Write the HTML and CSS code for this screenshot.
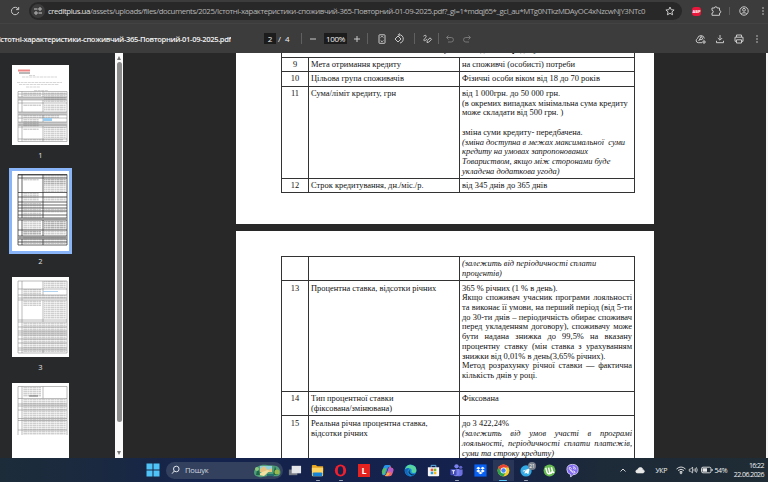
FILE: index.html
```html
<!DOCTYPE html>
<html lang="uk">
<head>
    <meta charset="UTF-8">
    <title>Істотні-характеристики-споживчий-365-Повторний-01-09-2025.pdf</title>
    <link rel="stylesheet" href="styles.css">
</head>
<body>
    <svg class="defs" width="0" height="0">
        <defs>
            <pattern id="txt" width="9" height="2" patternUnits="userSpaceOnUse">
                <path d="M0 .8h2.6M3 .8h3.6M7 .8h1.6" stroke="#777" stroke-width=".8" stroke-opacity=".65"/>
            </pattern>
        </defs>
    </svg>

    <header class="browser-bar">
        <svg class="reload" viewBox="0 0 12 12"><path d="M9.3 4.1A3.7 3.7 0 1 0 9.7 7M9.7 2v2.6H7.1"/></svg>
        <div class="omnibox">
            <span class="site-info"><svg viewBox="0 0 10 10"><path d="M1 3h3.5M5.5 7H9"/><circle cx="7" cy="3" r="1.2"/><circle cx="3" cy="7" r="1.2"/></svg></span>
            <span class="url"><b>creditplus.ua</b>/assets/uploads/files/documents/2025/Істотні-характеристики-споживчий-365-Повторний-01-09-2025.pdf?_gl=1*mdqj65*_gcl_au*MTg0NTkzMDAyOC4xNzcwNjY3NTc0</span>
            <svg class="star" viewBox="0 0 12 12"><path d="M6 2l1.2 2.7 2.9.3-2.2 1.9.7 2.9L6 8.3 3.4 9.8l.7-2.9L1.900 5l2.900-.3z"/></svg>
        </div>
        <div class="browser-icons">
            <span class="abp">ABP</span>
            <svg class="ext" viewBox="0 0 12 12"><path d="M2 3h2.500a1.300 1.300 0 0 1 2.600 0H9.500v2.500a1.300 1.300 0 0 1 0 2.600V10.300H2V8a1.300 1.300 0 0 0 0-2.600z"/></svg>
            <i class="bar-sep"></i>
            <svg class="profile" viewBox="0 0 12 12"><circle cx="6" cy="6" r="4.200"/><circle cx="6" cy="4.800" r="1.400"/><path d="M3.200 9c1-1.700 4.600-1.700 5.600 0"/></svg>
            <svg class="dots" viewBox="0 0 4 12"><circle cx="2" cy="3" r=".8"/><circle cx="2" cy="6" r=".8"/><circle cx="2" cy="9" r=".8"/></svg>
        </div>
    </header>

    <div class="pdf-bar">
        <div class="pdf-title"><span>Істотні-характеристики-споживчий-365-Повторний-01-09-2025.pdf</span></div>
        <div class="pdf-tools">
            <span class="box page-no">2</span><span class="total">/&nbsp; 4</span>
            <i class="sep s1"></i>
            <svg class="minus" viewBox="0 0 12 12"><path d="M3 6h6"/></svg>
            <span class="box zoom">100%</span>
            <svg class="plus" viewBox="0 0 12 12"><path d="M3 6h6M6 3v6"/></svg>
            <i class="sep s2"></i>
            <svg class="fit" viewBox="0 0 12 12"><rect x="3" y="1.800" width="6" height="8.500" rx=".5"/><path d="M4.700 4.500L6 3.200l1.300 1.300M4.700 7.500L6 8.800l1.300-1.300"/></svg>
            <svg class="rotate" viewBox="0 0 12 12"><path d="M2 6l3-3 3 3-3 3zM5.500 1.700C9 1.500 10.600 4 10.200 6.500c-.3 1.900-1.600 3.200-3.200 3.500M6.700.5L5.400 1.700l1.300 1.400"/></svg>
            <i class="sep s3"></i>
            <svg class="draw" viewBox="0 0 12 12"><path d="M2.500 3.200c2-1.700 3.500-.6 2.200 1.200-1.500 2-2.700 3.100-1.300 3.300 1.200.1 1.700-1.300 2.700-1.500M6 9.500l.2-1.800L9 4.800l1.500 1.500-2.800 2.900z"/></svg>
            <i class="sep s4"></i>
            <svg class="undo dim" viewBox="0 0 12 12"><path d="M4.500 2.500L2.500 4.500l2 2M2.700 4.500h4.500a2.200 2.200 0 0 1 0 4.500H4"/></svg>
            <svg class="redo dim" viewBox="0 0 12 12"><path d="M7.500 2.500l2 2-2 2M9.300 4.500H4.800a2.200 2.200 0 0 0 0 4.500H8"/></svg>
        </div>
        <div class="pdf-actions">
            <svg viewBox="0 0 12 12"><path d="M7 9.700H3.200A2.200 2.200 0 0 1 2.500 5.500 3.500 3.500 0 0 1 9.400 5.500M3.700 8l2.500-4.700L8 6.500M4.500 6.600h2.700M9 7v4M7 9h4"/></svg>
            <svg viewBox="0 0 12 12"><path d="M6 2v5M3.800 5L6 7.200 8.200 5M2.500 7.800v1.900h7V7.800"/></svg>
            <svg viewBox="0 0 12 12"><path d="M3.500 4V2h5v2M3.500 8.300H2V4.200h8v4.100H8.500M3.500 6.800h5v3.200h-5z"/></svg>
            <svg class="dots" viewBox="0 0 4 12"><circle cx="2" cy="3" r=".8"/><circle cx="2" cy="6" r=".8"/><circle cx="2" cy="9" r=".8"/></svg>
        </div>
    </div>

    <main class="viewer">
        <aside class="thumbs">
            <figure class="thumb">
                <svg viewBox="0 0 57 80">
                    <path d="M6 5.500h12" stroke="#e88" stroke-width="2"/><path d="M7 8h11" stroke="#888" stroke-width="1.200"/>
                    <path d="M17 10.500h6M10 12h35M5 17.500h45M7 19.500h40M14 22h14M22 25.500h14" stroke="#bbb" stroke-width=".6" stroke-dasharray="3 .6"/>
                    <path d="M6 26.500h49v50H6zM10 26.500v50M31 26.500v50" class="grid"/>
                    <path d="M6 32h49v3H6zM6 47h49v3H6zM6 57h49v4H6z" fill="#ccc"/>
                    <path d="M6 29h49M6 32h49M6 35h49M6 38h49M6 47h49M6 50h49M6 53h49M6 57h49M6 60h49M6 62h49M6 74h49" class="grid"/>
                    <path d="M11 27h18v4H11zM32 27h22v10H32zM11 39h18v2H11zM32 39h22v7H32zM11 50h36v3H11zM11 54h16v8H11zM11 63h16v2H11zM32 62h22v11H32zM11 74h40v2H11z" fill="url(#txt)"/>
                    <path d="M31 53h9v3h-9z" fill="#9bcdf0"/>
                </svg>
                <figcaption>1</figcaption>
            </figure>
            <figure class="thumb selected">
                <svg viewBox="0 0 57 80">
                    <path d="M6 3.500h49v70.500H6zM10 3.500v70.500M31 3.500v70.500" class="grid dark"/>
                    <path d="M6 4h49M6 7h49M6 21.500h49M6 26h49M6 31h49M6 34h49M6 37h49M6 40h49M6 44h49M6 47h49M6 49h49M6 59h49M6 65h49M6 68h49M6 71h49" class="grid dark"/>
                    <path d="M6 47h49v2H6zM6 65h49v3H6z" fill="#999"/>
                    <path d="M11 8h16v2H11zM32 4h22v17H32zM11 22h16v8H11zM32 25h22v5H32zM11 32h18v16H11zM32 37h22v5H32zM11 50h18v14H11zM32 50h22v14H32zM11 66h43v7H11z" fill="url(#txt)"/>
                    <path d="M32 8h22v6H32zM32 50h22v8H32zM11 60h18v4H11z" fill="url(#txt)"/>
                </svg>
                <figcaption>2</figcaption>
            </figure>
            <figure class="thumb">
                <svg viewBox="0 0 57 80">
                    <path d="M6 4h49v72H6zM10 4v72M31 4v14M31 23v22M31 73v3" class="grid"/>
                    <path d="M6 12h49M6 18h49M6 21h49M6 23h49M6 43h49M6 45h49M6 50h49M6 54h49M6 56h49M6 58h49M6 62h49M6 66h49M6 71h49M6 73h49" class="grid"/>
                    <path d="M32 4h22v7H32zM11 12h18v6H11zM11 23h18v6H11zM32 23h22v19H32zM11 45h43v30H11zM11 18h43v4H11z" fill="url(#txt)"/>
                    <path d="M31 14.500h15" stroke="#9bc6ea" stroke-width=".8"/>
                </svg>
                <figcaption>3</figcaption>
            </figure>
            <figure class="thumb">
                <svg viewBox="0 0 57 80">
                    <path d="M6 52V3.500h49V52M10 3.500V52M31 3.500v12" class="grid"/>
                    <path d="M6 15.500h49M6 21h49M6 23h49M6 27h49M6 35.500h49M6 37.500h49M6 47h49" class="grid"/>
                    <path d="M11 4h18v10H11zM11 16h43v36H11z" fill="url(#txt)"/>
                    <path d="M17 13h9" stroke="#555" stroke-width=".8"/>
                </svg>
            </figure>
        </aside>
        <div class="scrollbar"><i class="up"></i><i class="handle"></i><i class="down"></i></div>

        <section class="pages">
            <article class="page first">
                <div class="doc">
                    <div class="row head"><div class="num">8</div><div class="merged">Основні умови надання кредиту</div></div>
                    <div class="row r9"><div class="num">9</div><div class="name">Мета отримання кредиту</div><div class="val">на споживчі (особисті) потреби</div></div>
                    <div class="row r10"><div class="num">10</div><div class="name">Цільова група споживачів</div><div class="val">Фізичні особи віком від 18 до 70 років</div></div>
                    <div class="row r11">
                        <div class="num">11</div><div class="name">Сума/ліміт кредиту, грн</div>
                        <div class="val">від 1 000грн. до 50 000 грн.<br>(в окремих випадках мінімальна сума кредиту<br>може складати від 500 грн. )<br><br>зміна суми кредиту- передбачена.<br><em>(зміна доступна в межах максимальної&nbsp; суми<br>кредиту на умовах запропонованих<br>Товариством, якщо між сторонами буде<br>укладена додаткова угода)</em></div>
                    </div>
                    <div class="row r12"><div class="num">12</div><div class="name">Строк кредитування, дн./міс./р.</div><div class="val">від 345 днів до 365 днів</div></div>
                </div>
            </article>
            <article class="page second">
                <div class="doc">
                    <div class="row r12b"><div class="num"></div><div class="name"></div><div class="val"><em>(залежить від періодичності сплати<br>процентів)</em></div></div>
                    <div class="row r13">
                        <div class="num">13</div><div class="name">Процентна ставка, відсотки річних</div>
                        <div class="val">365 % річних (1 % в день).
                            <p class="just">Якщо споживач учасник програми лояльності</p>
                            <p class="just">та виконає її умови, на перший період (від 5-ти</p>
                            <p class="just">до 30-ти днів – періодичність обирає споживач</p>
                            <p class="just">перед укладенням договору), споживачу може</p>
                            <p class="just">бути надана знижка до 99,5% на вказану</p>
                            <p class="just">процентну ставку (мін ставка з урахуванням</p>
                            <p>знижки від 0,01% в день(3,65% річних).</p>
                            <p class="just">Метод розрахунку річної ставки — фактична</p>
                            <p>кількість днів у році.</p>
                        </div>
                    </div>
                    <div class="row r14"><div class="num">14</div><div class="name">Тип процентної ставки<br>(фіксована/змінювана)</div><div class="val">Фіксована</div></div>
                    <div class="row r15">
                        <div class="num">15</div><div class="name">Реальна річна процентна ставка,<br>відсотки річних</div>
                        <div class="val">до 3 422,24%
                            <em><p class="just">(залежить від умов участі в програмі</p>
                            <p class="just">лояльності, періодичності сплати платежів,</p>
                            <p>суми та строку кредиту)</p></em>
                        </div>
                    </div>
                </div>
            </article>
        </section>
        <div class="edge-scroll"></div>
    </main>

    <footer class="taskbar">
        <svg class="start" viewBox="0 0 14 14"><path d="M.5.500h6v6h-6zM7.500.500h6v6h-6zM.5 7.500h6v6h-6zM7.500 7.500h6v6h-6z" fill="#4fc3f7"/></svg>
        <div class="search">
            <svg class="lens" viewBox="0 0 10 10"><circle cx="5.300" cy="4" r="2.800"/><path d="M3.300 6L1 8.700"/></svg>
            <span>Пошук</span>
            <svg class="scene" viewBox="0 0 28 15">
                <path d="M1 9C2 3 9 1 14 2s11-1 13 5-3 7-8 6-9 2-13 1-5-2-5-5z" fill="#4f9c78"/>
                <path d="M7 3h12v5H7z" fill="#8ed0dc"/><path d="M7 6l4-3 4 4 4-2v4H7z" fill="#e4c382"/>
                <path d="M6 12c2-4 5-3 8-5l3 1c-3 1-3 3-6 5z" fill="#f3dfa0"/>
                <path d="M3 12l2-9 2 9zM20 12l2-9 3 9z" fill="#1f6848"/><circle cx="24" cy="9" r="2.500" fill="#9db84a"/><circle cx="4" cy="6" r="2" fill="#8bc77c"/><path d="M14 11h7v2h-7z" fill="#286d70"/>
            </svg>
        </div>
        <div class="apps">
            <div class="app"><svg viewBox="0 0 16 16"><path d="M2 7h9v6H2z" fill="#777b83"/><path d="M5 3h10v8H5z" fill="#e3e5e8"/></svg></div>
            <div class="app run"><svg viewBox="0 0 16 16"><path d="M2 3q0-1 1-1h3l2 1.500h6v5H2z" fill="#e8a520"/><path d="M2 5h12v8q0 1-1 1H3q-1 0-1-1z" fill="#ffd461"/><path d="M4 10h8q1 0 1 1v3H3v-3q0-1 1-1z" fill="#1784d8"/></svg></div>
            <div class="app run"><svg viewBox="0 0 16 16"><ellipse cx="8" cy="8" rx="6" ry="6.300" fill="#f2202e"/><ellipse cx="8" cy="8" rx="2.900" ry="4.600" fill="#15234a"/></svg></div>
            <div class="app"><span class="tile-l">L</span></div>
            <div class="app"><svg viewBox="0 0 16 16"><path d="M6 2h4q1 0 1.500 2l-3 1-2 6q-.5 2-2 2-3 0-2.500-3l1.500-5q.7-3 2.500-3z" fill="#2792e8"/><path d="M2 9l1-3 4-1-2 7q-2 2-3-3z" fill="#57bd67"/><path d="M10 2q1 0 1.500 2l.5 1q3 0 2 4l-1 3q-.6 2-3 2H6q-1 0-1-1 1.500 0 2-2l2-5q.6-2 2-2z" fill="#ed6574"/><path d="M9 6q1-2 3-1 3 0 2 4l-1 2q-2-3-5-2z" fill="#b55bc8"/><path d="M5 13q2 0 2.500-3l3 1q-1 3-3 3z" fill="#f3ad49"/></svg></div>
            <div class="app"><svg viewBox="0 0 16 16"><circle cx="8" cy="8" r="6.300" fill="#168bd6"/><path d="M2 7Q4 1 9 2q6 1 5.200 7-1 2-4 1.500-2-.5-1-2 .4-3-3-3Q3.500 5.500 2 7z" fill="#57d5a0"/><path d="M7 7q-3 4 2 6 2 .8 4-1.500-3 1.500-5-.5Q6.500 9.500 7 7z" fill="#102b56"/><path d="M2 7q2-2 4.500-1.500Q4 8 5 11q1 2 3 3-6 0-6-7z" fill="#1464ba"/></svg></div>
            <div class="app"><svg viewBox="0 0 16 16"><path d="M5.500 5V2.500h5V5" fill="none" stroke="#63baf0"/><path d="M2 4.500h12V13q0 1-1 1H3q-1 0-1-1z" fill="#f5f5f5"/><path d="M5 6h2.700v2.700H5z" fill="#ef5533"/><path d="M8.300 6H11v2.700H8.300z" fill="#78b82a"/><path d="M5 9.300h2.700V12H5z" fill="#21a1e8"/><path d="M8.300 9.300H11V12H8.300z" fill="#f8b91a"/></svg></div>
            <div class="app run"><svg viewBox="0 0 16 16"><circle cx="8" cy="3.500" r="2.300" fill="#7a83ed"/><circle cx="12.500" cy="4.500" r="1.700" fill="#6264ce"/><path d="M9 7h5.500v4q0 3-3 3H9z" fill="#6b6fe0"/><path d="M4 6.500h7V11q0 3-3.500 3T4 11z" fill="#7b83eb"/><rect x="1.500" y="6.500" width="6.500" height="6.500" rx=".8" fill="#444db5"/><path d="M3 8.200h3.500M4.750 8.200v3.500" stroke="#fff" stroke-width=".9"/></svg></div>
            <div class="app"><svg viewBox="0 0 16 16"><path d="M1.500 1.500h13v13h-13z" fill="#0861f2"/><path d="M5.700 4L8 5.500 5.700 7 3.400 5.500zM10.300 4l2.300 1.500L10.300 7 8 5.500zM5.700 7L8 8.500 5.700 10 3.400 8.500zM10.300 7l2.300 1.500-2.300 1.500L8 8.500zM8 9.200l2.300 1.400L8 12l-2.300-1.400z" fill="#fff"/></svg></div>
            <div class="app active"><svg viewBox="0 0 16 16"><circle cx="8" cy="8" r="6.300" fill="#f9ca28"/><path d="M2.500 4.900a6.300 6.300 0 0 1 11 0H8L5.300 9.600z" fill="#e94335"/><path d="M2.500 4.900a6.300 6.300 0 0 0 5.300 9.400L10.600 9.500H5.300z" fill="#2ba24c"/><circle cx="8" cy="8" r="3.100" fill="#fff"/><circle cx="8" cy="8" r="2.400" fill="#4285f4"/></svg></div>
            <div class="app run"><svg viewBox="0 0 16 16"><circle cx="7.500" cy="8.500" r="6" fill="#32a9e4"/><path d="M3.500 8.500l8-3-1.500 6.500-2.500-1.700-1.400 1.300-.1-2.300 3.500-3L5 9z" fill="#fff"/></svg><span class="badge">21</span></div>
            <div class="app"><svg viewBox="0 0 16 16"><circle cx="8" cy="8" r="6.300" fill="#64b950"/><path d="M4 5l1.200 4.500q.7 2.500 3.300 1.700L7 5M10 4.500l1.300 4.800q.5 1 1.700.6M8.500 11.200q2.500-.2 2-2.500" fill="none" stroke="#fff" stroke-width="1.600"/></svg></div>
            <div class="app"><svg viewBox="0 0 16 16"><path d="M8 1.500q6 0 6 5.500 0 5.500-5.500 5.500L6 15v-2.700Q2 11.500 2 7q0-5.500 6-5.500z" fill="#8068f0" stroke="#eeeaff" stroke-width=".8"/><path d="M5.300 4.300q-1.300.5-.6 2 1.600 3.300 4.600 4.400 1.200.3 1.500-1.100L9.200 8.500l-.8.700Q6.800 8.300 6.200 6.800l.7-.8zM8.300 3.800q3 .1 3.200 3.200M8.500 5.300q1.400.2 1.500 1.600" fill="none" stroke="#fff" stroke-width=".8"/></svg></div>
        </div>
        <div class="tray">
            <svg class="chev" viewBox="0 0 8 8"><path d="M1.500 5.500L4 3l2.500 2.500"/></svg>
            <svg class="cloud" viewBox="0 0 12 10"><path d="M3 8.500Q1 8.500 1 6.700t2-1.900Q4 2 6.500 2 9 2 9.400 4.600 11.300 5 11.200 6.800 11 8.500 9.300 8.500z"/></svg>
            <span class="lang">УКР</span>
            <svg class="wifi" viewBox="0 0 12 10"><path d="M1.500 4q4.500-4 9 0M3 5.500q3-2.500 6 0M4.500 7q1.500-1.200 3 0"/><circle cx="6" cy="8" r=".8"/></svg>
            <svg class="vol" viewBox="0 0 12 10"><path d="M1.500 4v2.500H3L5.500 8.500v-7L3 4zM7 3.800q1 1.200 0 2.500M8.500 2.700q1.800 2.300 0 4.700M10 1.700q2.300 3.300 0 6.600"/></svg>
            <svg class="batt" viewBox="0 0 12 10"><rect x=".5" y="2.200" width="9.500" height="5.600" rx="1.500"/><path d="M1.500 3.200h4.500v3.600H1.500zM10.600 4h1v2h-1z" class="f"/></svg>
            <span class="pct">54%</span>
            <div class="clock"><span>16:22</span><span>22.06.2026</span></div>
        </div>
    </footer>
</body>
</html>
```
FILE: styles.css
```css
* {
    box-sizing: border-box;
}

body {
    margin: 0;
    width: 768px;
    height: 482px;
    overflow: hidden;
    display: flex;
    flex-direction: column;
    background: #3c3c3c;
    color: #e3e3e3;
    font-family: "Open Sans", sans-serif;
    font-size: 8px;
}

svg {
    display: block;
    flex: none;
}

p, figure {
    margin: 0;
}

/* Browser bar */
.browser-bar {
    height: 24px;
    flex: none;
    display: flex;
    align-items: flex-start;
    padding-top: 2px;
    border-bottom: 1px solid #434343;
}

.browser-bar svg, .pdf-bar svg {
    width: 12px;
    height: 12px;
    fill: none;
    stroke: #c9c9c9;
    stroke-width: 1;
}

.browser-bar .reload {
    margin: 3px 8px 0 9px;
}

.omnibox {
    width: 653px;
    flex: none;
    height: 18px;
    border-radius: 9px;
    background: #282828;
    display: flex;
    align-items: center;
    padding-left: 2px;
}

.site-info {
    width: 14px;
    height: 14px;
    flex: none;
    border-radius: 50%;
    background: #3c3c3c;
    padding: 2px;
    margin-right: 3px;
}

.browser-bar .site-info svg {
    width: 10px;
    height: 10px;
}

.url {
    width: 616px;
    flex: none;
    white-space: nowrap;
    font-size: 7.8px;
    letter-spacing: -.41px;
    color: #b5b5b5;
}

.url b {
    font-weight: normal;
    color: #e3e3e3;
}

.browser-icons {
    display: flex;
    align-items: center;
    height: 18px;
    margin-left: 10px;
}

.abp {
    width: 9px;
    height: 9px;
    border-radius: 3px;
    background: #e8183c;
    color: #fff;
    font-size: 4px;
    font-weight: bold;
    line-height: 9px;
    text-align: center;
}

.ext {
    margin-left: 9px;
}

.bar-sep {
    width: 1px;
    height: 8px;
    background: #5d5d5d;
    margin: 0 8px 0 7px;
}

.browser-bar svg.dots, .pdf-bar svg.dots {
    width: 4px;
    fill: #c9c9c9;
    stroke: none;
}

.browser-bar svg.dots {
    margin-left: 11px;
}

/* PDF toolbar */
.pdf-bar {
    height: 29px;
    flex: none;
    display: flex;
    align-items: center;
    color: #f1f1f1;
}

.pdf-title {
    width: 231px;
    height: 14px;
    margin-right: 33px;
    display: flex;
    justify-content: flex-end;
    overflow: hidden;
    white-space: nowrap;
    font-size: 7.6px;
    letter-spacing: -.36px;
    font-weight: 600;
    line-height: 14px;
}

.pdf-tools {
    width: 426px;
    display: flex;
    align-items: center;
}

.box {
    height: 11px;
    line-height: 11px;
    background: #1c1c1c;
    text-align: center;
}

.page-no {
    width: 12px;
}

.total {
    width: 22px;
    padding-left: 2px;
}

.zoom {
    width: 23px;
    letter-spacing: -.3px;
}

.sep {
    width: 1px;
    height: 11px;
    background: #606060;
}

.s1 { margin: 0 5px 0 3px; }
.minus { margin-right: 5px; }
.plus { margin-left: 4px; }
.s2 { margin: 0 8px 0 4px; }
.rotate { margin-left: 5px; }
.s3 { margin: 0 6px 0 9px; }
.s4 { margin: 0 5px 0 5px; }
.redo { margin-left: 5px; }

.pdf-bar .dim {
    stroke: #777;
}

.pdf-actions {
    display: flex;
    gap: 7px;
    margin-left: 5px;
}

.pdf-bar svg.dots {
    margin-left: 3px;
}

/* Viewer */
.viewer {
    height: 405px;
    flex: none;
    display: flex;
    overflow: hidden;
    background: #282828;
}

.thumbs {
    width: 115px;
    flex: none;
    padding: 12px 0 0 12px;
    background: #28292a;
}

.thumb {
    width: 57px;
    height: 106px;
}

.thumb svg {
    width: 57px;
    height: 80px;
    background: #fff;
}

.thumb.selected svg {
    outline: 3px solid #8ab4f8;
}

.thumb figcaption {
    text-align: center;
    line-height: 20px;
    font-size: 7.5px;
}

.grid {
    fill: none;
    stroke: #777;
    stroke-width: .5;
}

.grid.dark {
    stroke: #222;
    stroke-width: .7;
}

.scrollbar {
    width: 8px;
    flex: none;
    background: #fafafa;
    display: flex;
    flex-direction: column;
    align-items: center;
    padding: 3px 0;
}

.up, .down {
    border: 2.5px solid transparent;
    border-top: 0;
    border-bottom: 4px solid #777;
}

.down {
    border-bottom: 0;
    border-top: 4px solid #777;
    margin-top: auto;
}

.handle {
    width: 5px;
    height: 360px;
    margin-top: 2px;
    border-radius: 3px;
    background: #8b8b8b;
}

.pages {
    width: 418px;
    margin-left: 113px;
    flex: none;
}

.page {
    background: #fff;
    padding-left: 45px;
    overflow: hidden;
}

.first {
    height: 171px;
    margin-bottom: 7px;
}

.second {
    height: 300px;
    padding-top: 25px;
}

.doc {
    width: 354px;
    border: solid #333;
    border-width: 0 1px;
    color: #111;
    font-family: "Liberation Serif", serif;
    font-size: 8.43px;
    line-height: 9.72px;
}

.second .doc {
    border-top: 1px solid #333;
}

.row {
    display: flex;
    border-bottom: 1px solid #333;
}

.num {
    width: 27px;
    text-align: center;
    padding-top: 2px;
    border-right: 1px solid #333;
}

.name {
    width: 151px;
    padding: 2px 0 0 2px;
    border-right: 1px solid #333;
    white-space: nowrap;
}

.val {
    width: 174px;
    padding: 2px 0 0 2px;
    white-space: nowrap;
}

.just {
    width: 170px;
    text-align-last: justify;
}

/* heading row, scrolled almost out of view */
.head {
    height: 5px;
    align-items: flex-start;
}

.head .num, .head .merged {
    border: 0;
    padding-top: 0;
    margin-top: -8px;
}

.merged {
    font-weight: bold;
    padding-left: 100px;
    word-spacing: 2px;
}

.r9 { height: 14px; }
.r10 { height: 15px; }
.r11 { height: 92px; }
.r12 { height: 14px; }
.r12b { height: 24px; }
.r13 { height: 111px; }
.r14 { height: 24px; }
.r15 { height: 80px; line-height: 10px; }

.r13 .num, .r13 .name, .r13 .val {
    padding-top: 2.5px;
}

.edge-scroll {
    width: 2px;
    margin-left: auto;
    background: #f5f5f5;
}

/* Taskbar */
.taskbar {
    height: 24px;
    flex: none;
    display: flex;
    align-items: center;
    padding-left: 146px;
    background: linear-gradient(90deg, #1d2c39 0, #1a2940 100px, #14234c 200px, #14214c 480px, #1d2a38 600px, #1f2c35 100%);
}

.start {
    width: 14px;
    height: 14px;
}

.search {
    width: 117px;
    height: 17px;
    margin-left: 6px;
    border-radius: 9px;
    background: #33415f;
    display: flex;
    align-items: center;
    padding-left: 5px;
    color: #d0d5df;
    font-size: 7.6px;
    letter-spacing: -.2px;
}

.lens {
    width: 10px;
    height: 10px;
    margin-right: 4px;
    fill: none;
    stroke: #e0e4ec;
}

.scene {
    width: 28px;
    height: 15px;
    margin-left: auto;
    margin-right: 2px;
}

.apps {
    display: flex;
}

.app {
    position: relative;
    width: 23.2px;
    height: 24px;
    display: flex;
    align-items: center;
    justify-content: center;
}

.app svg {
    width: 15px;
    height: 15px;
}

.run::after, .active::after {
    content: "";
    position: absolute;
    bottom: 1px;
    width: 4px;
    height: 1.5px;
    border-radius: 1px;
    background: #9aa4b8;
}

.active {
    background: linear-gradient(#2a3657, #2a3657) center / 21px 21px no-repeat;
}

.active::after {
    width: 8px;
    background: #5ac8fa;
}

.tile-l {
    width: 12px;
    height: 13px;
    background: #e42320;
    color: #fff;
    font-size: 9px;
    font-weight: bold;
    line-height: 13px;
    text-align: center;
}

.badge {
    position: absolute;
    top: 4px;
    right: 2px;
    width: 8px;
    height: 8px;
    border-radius: 50%;
    background: #77808c;
    color: #fff;
    font-size: 5px;
    line-height: 8px;
    text-align: center;
}

.tray {
    flex: 1;
    display: flex;
    align-items: center;
    font-size: 7px;
    letter-spacing: -.4px;
    color: #f0f0f0;
    padding: 0 4px 0 35px;
}

.tray svg {
    height: 10px;
    width: 12px;
    fill: none;
    stroke: #e8e8e8;
    stroke-width: .9;
}

.tray .chev {
    width: 8px;
    height: 8px;
}

.tray .cloud {
    width: 10px;
    margin: 0 10px 0 8px;
    fill: #e8e8e8;
}

.lang {
    width: 20px;
}

.tray .vol {
    width: 10px;
    margin: 0 3px 0 1px;
}

.pct {
    margin-left: 1px;
}

.tray .f {
    fill: #e8e8e8;
    stroke: none;
}

.clock {
    margin-left: auto;
    display: flex;
    flex-direction: column;
    text-align: right;
    line-height: 9px;
    letter-spacing: -.55px;
}
```
